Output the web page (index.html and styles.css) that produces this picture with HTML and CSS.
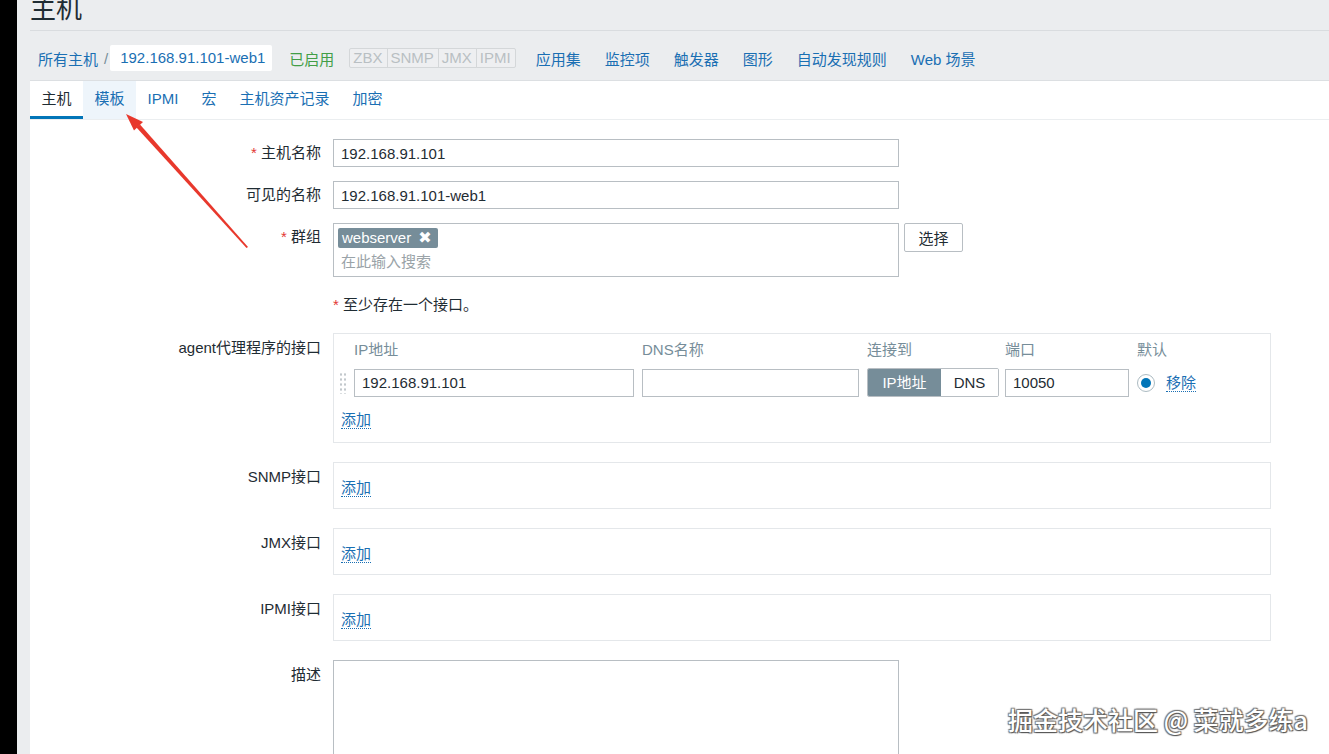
FILE: index.html
```html
<!DOCTYPE html>
<html lang="zh-CN">
<head>
<meta charset="utf-8">
<title>主机</title>
<link rel="stylesheet" href="styles.css">
</head>
<body>
<div class="app">
  <div class="edge"></div>
  <main class="main">
    <header class="page-header"><h1>主机</h1></header>
    <nav class="crumbs">
      <a class="link" href="#">所有主机</a>
      <span class="sep">/</span>
      <span class="crumb-current">192.168.91.101-web1</span>
      <span class="status-on">已启用</span>
      <span class="avail">
        <span class="avail-item">ZBX</span><span class="avail-item">SNMP</span><span class="avail-item">JMX</span><span class="avail-item">IPMI</span>
      </span>
      <ul class="subnav">
        <li><a class="link" href="#">应用集</a></li>
        <li><a class="link" href="#">监控项</a></li>
        <li><a class="link" href="#">触发器</a></li>
        <li><a class="link" href="#">图形</a></li>
        <li><a class="link" href="#">自动发现规则</a></li>
        <li><a class="link" href="#">Web 场景</a></li>
      </ul>
    </nav>
    <section class="panel">
      <ul class="tabs">
        <li class="tab active">主机</li>
        <li class="tab hover">模板</li>
        <li class="tab">IPMI</li>
        <li class="tab">宏</li>
        <li class="tab">主机资产记录</li>
        <li class="tab">加密</li>
      </ul>
      <form class="form">
        <div class="row">
          <label class="lbl"><span class="req">*</span> 主机名称</label>
          <div class="ctl"><input class="text w565" type="text" value="192.168.91.101"></div>
        </div>
        <div class="row">
          <label class="lbl">可见的名称</label>
          <div class="ctl"><input class="text w565" type="text" value="192.168.91.101-web1"></div>
        </div>
        <div class="row">
          <label class="lbl"><span class="req">*</span> 群组</label>
          <div class="ctl ctl-inline">
            <div class="multiselect">
              <span class="tag">webserver <span class="tag-x">✖</span></span>
              <div class="ms-placeholder">在此输入搜索</div>
            </div>
            <button class="btn" type="button">选择</button>
          </div>
        </div>
        <div class="row">
          <div class="lbl"></div>
          <div class="ctl note"><span class="req">*</span> 至少存在一个接口。</div>
        </div>
        <div class="row iface">
          <label class="lbl lbl-box">agent代理程序的接口</label>
          <div class="ctl">
            <div class="box agent-box">
              <div class="if-grid">
                <span></span>
                <span class="th">IP地址</span>
                <span class="th">DNS名称</span>
                <span class="th">连接到</span>
                <span class="th th-port">端口</span>
                <span class="th th-span">默认</span>
                <span class="handle"></span>
                <input class="text" type="text" value="192.168.91.101">
                <input class="text" type="text" value="">
                <span class="toggle"><span class="tg on">IP地址</span><span class="tg">DNS</span></span>
                <input class="text port" type="text" value="10050">
                <span class="radio"><span class="radio-dot"></span></span>
                <a class="link dotted" href="#">移除</a>
              </div>
              <div class="add-line"><a class="link dotted" href="#">添加</a></div>
            </div>
          </div>
        </div>
        <div class="row iface">
          <label class="lbl lbl-box">SNMP接口</label>
          <div class="ctl"><div class="box empty-box"><a class="link dotted" href="#">添加</a></div></div>
        </div>
        <div class="row iface">
          <label class="lbl lbl-box">JMX接口</label>
          <div class="ctl"><div class="box empty-box"><a class="link dotted" href="#">添加</a></div></div>
        </div>
        <div class="row iface">
          <label class="lbl lbl-box">IPMI接口</label>
          <div class="ctl"><div class="box empty-box"><a class="link dotted" href="#">添加</a></div></div>
        </div>
        <div class="row">
          <label class="lbl lbl-box">描述</label>
          <div class="ctl"><textarea class="textarea"></textarea></div>
        </div>
      </form>
    </section>
  </main>
</div>
<svg class="arrow" width="1329" height="754" viewBox="0 0 1329 754" xmlns="http://www.w3.org/2000/svg">
  <polygon points="246.5,248 248,247 140,124.5 136.5,127.5" fill="#e8382c"/>
  <polygon points="126,114 143,122 134,130.5" fill="#e8382c"/>
</svg>
<div class="watermark">掘金技术社区 @ 菜就多练a</div>
</body>
</html>
```
FILE: styles.css
```css
* { box-sizing: border-box; }
html, body { margin: 0; padding: 0; }
body {
  width: 1329px;
  height: 754px;
  overflow: hidden;
  position: relative;
  font-family: "Liberation Sans", Arial, "Noto Sans CJK SC", sans-serif;
  font-size: 15px;
  color: #1f2c33;
  background: #ebedef;
}
ul { list-style: none; margin: 0; padding: 0; }
a { text-decoration: none; }

.app { display: flex; height: 754px; }
.edge { width: 17px; flex: none; background: #000; }
.main { flex: 1; background: #ebedef; padding-left: 13px; }

.page-header {
  height: 31px;
  display: flex;
  align-items: flex-end;
  overflow: hidden;
  border-bottom: 1px solid #d9dcdf;
  padding-bottom: 10px;
}
.page-header h1 {
  margin: 0;
  font-size: 26px;
  line-height: 26px;
  font-weight: normal;
  color: #1f2c33;
  font-family: "Noto Sans CJK SC", sans-serif;
}

.crumbs {
  display: flex;
  align-items: center;
  height: 50px;
  padding: 14px 0 9px 8px;
  border-bottom: 1px solid #dcdfe2;
}
.link { color: #1a6fb3; }
.sep { color: #768d99; margin: 0 2px 0 6px; }
.crumb-current {
  background: #fff;
  color: #1a6fb3;
  height: 26px;
  line-height: 26px;
  padding: 0 7px 0 10px;
  border-radius: 2px;
}
.status-on { color: #429e47; margin-left: 17px; }
.avail { display: flex; margin-left: 15px; height: 20px; }
.avail-item {
  border: 1px solid #d4d7d9;
  margin-left: -1px;
  padding: 0 4px 0 3px;
  line-height: 18px;
  color: #b9bfc3;
  background: #eeeff1;
}
.avail-item:first-child { margin-left: 0; border-radius: 2px 0 0 2px; }
.avail-item:last-child { border-radius: 0 2px 2px 0; }
.subnav { display: flex; margin-left: 20px; gap: 24px; }

.panel { background: #fff; height: 673px; overflow: hidden; }
.tabs {
  display: flex;
  height: 39px;
  border-bottom: 1px solid #ebeef0;
}
.tab {
  padding: 0 11.5px;
  line-height: 35px;
  height: 38px;
  border-bottom: 3px solid transparent;
  color: #1a6fb3;
}
.tab.active { color: #1f2c33; border-bottom-color: #0275b8; }
.tab.hover { background: #eef5fb; }

.form { padding-top: 19px; }
.row {
  display: grid;
  grid-template-columns: 291px 1fr;
  column-gap: 12px;
  margin-bottom: 14px;
}
.row.iface { margin-bottom: 19px; }
.lbl {
  text-align: right;
  padding-top: 5px;
  line-height: 18px;
  color: #1f2c33;
}
.lbl-box { padding-top: 6px; }
.req { color: #e33734; }
.ctl-inline { display: flex; align-items: flex-start; gap: 5px; }

.text {
  font: inherit;
  color: #1f2c33;
  height: 28px;
  border: 1px solid #b8bec3;
  padding: 0 7px;
  background: #fff;
  outline: none;
  border-radius: 0;
}
.w565 { width: 566px; display: block; }

.multiselect {
  width: 566px;
  height: 54px;
  border: 1px solid #b8bec3;
  padding: 4px 4px;
}
.tag {
  display: inline-flex;
  align-items: center;
  height: 20px;
  background: #768d99;
  color: #fff;
  border-radius: 2px;
  padding: 0 6px 0 4px;
  line-height: 20px;
}
.tag-x { font-size: 16px; margin-left: 7px; font-weight: bold; font-family: "DejaVu Sans", sans-serif; }
.ms-placeholder { color: #9aa3a8; line-height: 22px; padding-left: 3px; margin-top: 3px; }
.btn {
  font: inherit;
  color: #1f2c33;
  background: #fff;
  border: 1px solid #b8bec3;
  border-radius: 2px;
  width: 59px;
  height: 29px;
  padding: 0;
}

.note { line-height: 28px; height: 28px; }

.box {
  width: 938px;
  border: 1px solid #e4e7ea;
  background: #fff;
}
.agent-box { height: 110px; padding: 7px 6px 0; }
.if-grid {
  display: grid;
  grid-template-columns: 6px 280px 217px 132px 122px 18px auto;
  column-gap: 8px;
  row-gap: 9px;
  align-items: center;
}
.if-grid .text { width: 100%; }
.if-grid .port { margin-left: -2px; width: calc(100% + 2px); }
.th { color: #768d99; line-height: 18px; white-space: nowrap; }
.th-port { margin-left: -2px; }
.th-span { grid-column: span 2; }
.handle {
  height: 22px;
  width: 7px;
  background-image: radial-gradient(circle, #c2c8cc 1px, transparent 1.3px);
  background-size: 4px 5px;
  background-position: -1px 0;
}
.toggle {
  display: flex;
  height: 29px;
  border: 1px solid #b8bec3;
  border-radius: 2px;
  overflow: hidden;
}
.tg { flex: 1; text-align: center; line-height: 27px; background: #fff; color: #1f2c33; }
.tg.on { flex: 0 0 73px; background: #768d99; color: #fff; }
.radio {
  width: 18px; height: 18px;
  border: 1px solid #acbbc2;
  border-radius: 50%;
  display: flex; align-items: center; justify-content: center;
  background: #fff;
}
.radio-dot { width: 10px; height: 10px; border-radius: 50%; background: #0275b8; }
.dotted { border-bottom: 1px dotted #1a6fb3; line-height: 17px; display: inline-block; }
.if-grid .dotted { justify-self: start; margin-left: 3px; }
.add-line { margin-top: 14px; padding-left: 1px; }
.empty-box { height: 47px; padding: 16px 7px 0; }

.textarea {
  display: block;
  width: 566px;
  height: 100px;
  border: 1px solid #b8bec3;
  font: inherit;
  resize: none;
  outline: none;
}

.arrow { position: absolute; left: 0; top: 0; pointer-events: none; }
.watermark {
  position: absolute;
  right: 21px;
  top: 701px;
  font-family: "Noto Sans CJK SC", sans-serif;
  font-size: 25px;
  font-weight: 500;
  color: #fff;
  text-shadow: 1px 1px 1px #555, -1px -1px 1px #777, 1px -1px 1px #777, -1px 1px 1px #777;
  white-space: nowrap;
}
```
